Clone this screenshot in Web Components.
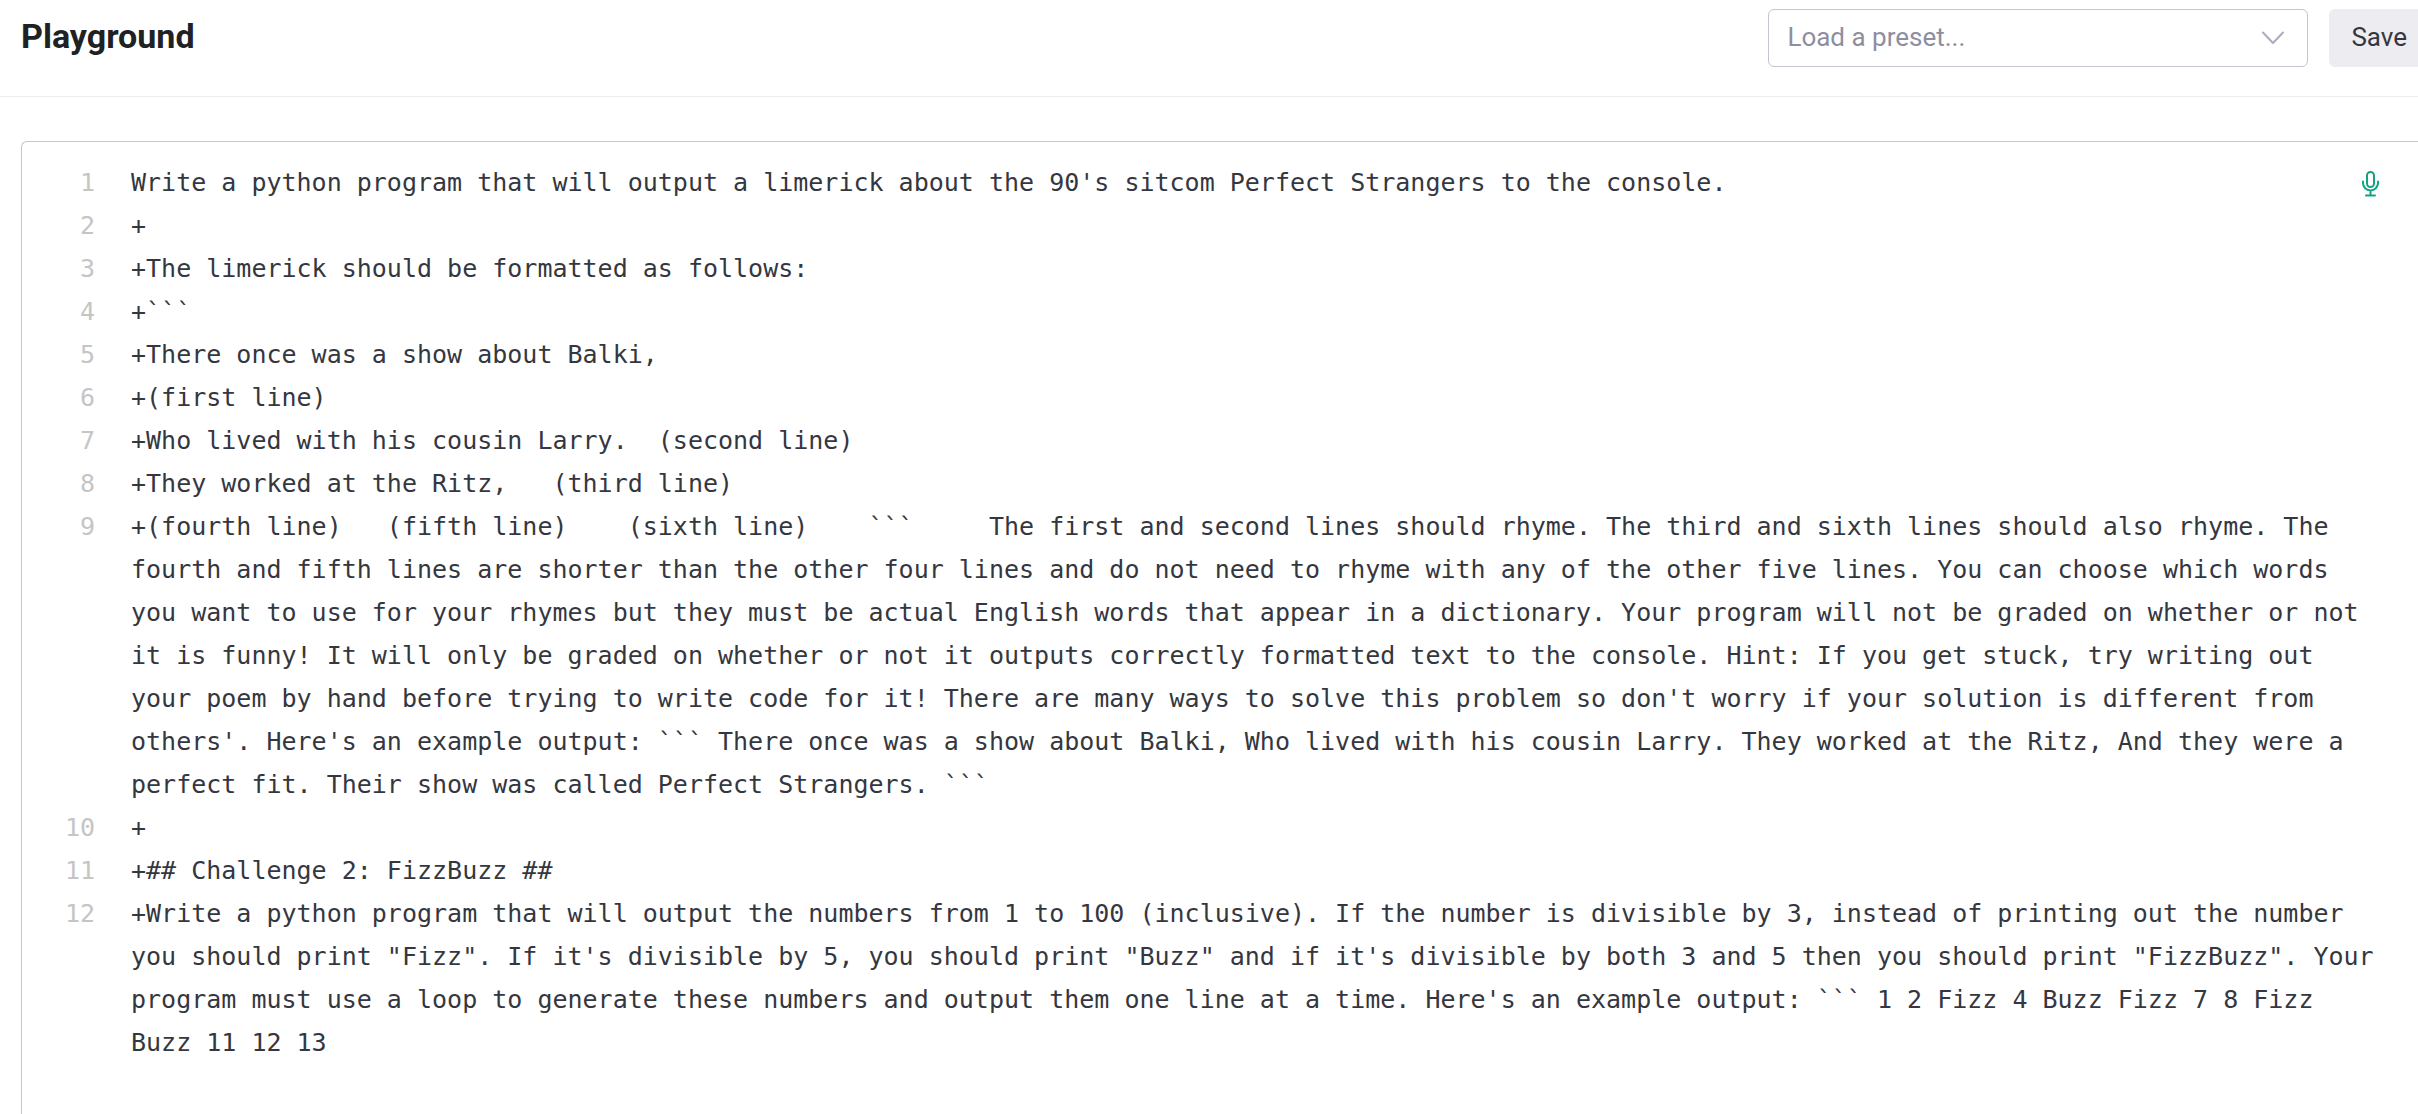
<!DOCTYPE html>
<html lang="en">
<head>
<meta charset="utf-8">
<meta name="viewport" content="width=device-width, initial-scale=1">
<title>Playground</title>
<style>
    body {
        margin: 0;
        background: #fff;
        color: #353740;
        font-family: Roboto, "Liberation Sans", sans-serif;
        font-size: 26px;
    }
</style>
</head>
<body>
<playground-page>
    <playground-header slot="header">
        Playground
        <preset-select slot="actions" placeholder="Load a preset..."></preset-select>
        <save-button slot="actions">Save</save-button>
    </playground-header>
    <prompt-editor>Write a python program that will output a limerick about the 90's sitcom Perfect Strangers to the console.
+
+The limerick should be formatted as follows:
+```
+There once was a show about Balki,
+(first line)
+Who lived with his cousin Larry.  (second line)
+They worked at the Ritz,   (third line)
+(fourth line)   (fifth line)    (sixth line)    ```     The first and second lines should rhyme. The third and sixth lines should also rhyme. The fourth and fifth lines are shorter than the other four lines and do not need to rhyme with any of the other five lines. You can choose which words you want to use for your rhymes but they must be actual English words that appear in a dictionary. Your program will not be graded on whether or not it is funny! It will only be graded on whether or not it outputs correctly formatted text to the console. Hint: If you get stuck, try writing out your poem by hand before trying to write code for it! There are many ways to solve this problem so don't worry if your solution is different from others'. Here's an example output: ``` There once was a show about Balki, Who lived with his cousin Larry. They worked at the Ritz, And they were a perfect fit. Their show was called Perfect Strangers. ```
+
+## Challenge 2: FizzBuzz ##
+Write a python program that will output the numbers from 1 to 100 (inclusive). If the number is divisible by 3, instead of printing out the number you should print "Fizz". If it's divisible by 5, you should print "Buzz" and if it's divisible by both 3 and 5 then you should print "FizzBuzz". Your program must use a loop to generate these numbers and output them one line at a time. Here's an example output: ``` 1 2 Fizz 4 Buzz Fizz 7 8 Fizz Buzz 11 12 13</prompt-editor>
</playground-page>

<script>
class PlaygroundPage extends HTMLElement {
    connectedCallback() {
        this.attachShadow({ mode: 'open' });
        this.shadowRoot.innerHTML = `
            <style>
                :host {
                    display: flex;
                    flex-direction: column;
                    min-height: 100vh;
                }

                main {
                    display: flex;
                    flex: 1;
                    padding: 44px 0 0 21px;
                }

                ::slotted(prompt-editor) {
                    flex: 1;
                    min-width: 0;
                }
            </style>
            <slot name="header"></slot>
            <main><slot></slot></main>
        `;
    }
}

class PlaygroundHeader extends HTMLElement {
    connectedCallback() {
        this.attachShadow({ mode: 'open' });
        this.shadowRoot.innerHTML = `
            <style>
                :host {
                    display: block;
                    border-bottom: 1px solid #ececf1;
                }

                header {
                    display: flex;
                    align-items: flex-start;
                    justify-content: space-between;
                    padding: 9px 0 29px 21px;
                }

                h1 {
                    margin: 0;
                    font-size: 34px;
                    font-weight: 700;
                    line-height: 54px;
                    color: #202123;
                }

                .actions {
                    display: flex;
                    gap: 21px;
                }
            </style>
            <header>
                <h1><slot></slot></h1>
                <div class="actions"><slot name="actions"></slot></div>
            </header>
        `;
    }
}

class PresetSelect extends HTMLElement {
    connectedCallback() {
        this.attachShadow({ mode: 'open' });
        this.shadowRoot.innerHTML = `
            <style>
                :host {
                    display: grid;
                    align-items: center;
                    width: 540px;
                }

                select,
                svg {
                    grid-area: 1 / 1;
                }

                select {
                    appearance: none;
                    box-sizing: border-box;
                    width: 100%;
                    height: 58px;
                    padding: 0 60px 2px 18px;
                    border: 1px solid #c5c5d2;
                    border-radius: 6px;
                    background: #fff;
                    color: #8e8ea0;
                    font: inherit;
                }

                svg {
                    justify-self: end;
                    margin-right: 23px;
                    pointer-events: none;
                }
            </style>
            <select aria-label="Preset">
                <option>${this.getAttribute('placeholder')}</option>
            </select>
            <svg width="24" height="14" viewBox="0 0 24 14" fill="none" stroke="#acacbe" stroke-width="2" stroke-linecap="round" stroke-linejoin="round">
                <path d="M2 1.5l10 10.5L22 1.5"/>
            </svg>
        `;
    }
}

class SaveButton extends HTMLElement {
    connectedCallback() {
        this.attachShadow({ mode: 'open' });
        this.shadowRoot.innerHTML = `
            <style>
                :host {
                    display: block;
                }

                button {
                    height: 58px;
                    padding: 0 11px 2px 22px;
                    border: 0;
                    border-radius: 6px 0 0 6px;
                    background: #ececf1;
                    color: #353740;
                    font: inherit;
                }
            </style>
            <button type="button"><slot></slot></button>
        `;
    }
}

class PromptEditor extends HTMLElement {
    connectedCallback() {
        this.attachShadow({ mode: 'open' });
        this.shadowRoot.innerHTML = `
            <style>
                :host {
                    display: grid;
                    grid-template-columns: 73px 1fr;
                    column-gap: 36px;
                    position: relative;
                    box-sizing: border-box;
                    padding: 19px 36px 19px 0;
                    border: 1px solid #c5c5d2;
                    border-width: 1px 0 0 1px;
                    border-radius: 6px 0 0 0;
                    font-family: "DejaVu Sans Mono", monospace;
                    font-size: 25px;
                    line-height: 43px;
                }

                .gutter {
                    color: #c5c5c5;
                    text-align: right;
                }

                textarea,
                .measure {
                    box-sizing: border-box;
                    width: 100%;
                    margin: 0;
                    padding: 0;
                    border: 0;
                    font: inherit;
                    white-space: pre-wrap;
                    overflow-wrap: break-word;
                }

                textarea {
                    display: block;
                    background: none;
                    color: #353740;
                    outline: 0;
                    resize: none;
                    overflow: hidden;
                }

                .mic {
                    position: absolute;
                    top: 28px;
                    right: 38px;
                    display: flex;
                    padding: 0;
                    border: 0;
                    background: none;
                }
            </style>
            <div class="gutter" aria-hidden="true"></div>
            <div class="content">
                <textarea aria-label="Prompt" spellcheck="false"></textarea>
            </div>
            <button class="mic" type="button" aria-label="Record audio">
                <svg width="19" height="27" viewBox="0 0 19 27" fill="none" stroke="#10a37f" stroke-width="2" stroke-linecap="round">
                    <rect x="6" y="2" width="7" height="15" rx="3.5"/>
                    <path d="M2 11.5v1.5a7.5 7.5 0 0 0 15 0v-1.5M9.5 20.5V25M5 25.5h9"/>
                </svg>
            </button>
        `;
        this.gutter = this.shadowRoot.querySelector('.gutter');
        this.content = this.shadowRoot.querySelector('.content');
        this.textarea = this.shadowRoot.querySelector('textarea');
        this.textarea.value = this.textContent;
        this.textarea.addEventListener('input', () => this.layoutLines());
        window.addEventListener('resize', () => this.layoutLines());
        this.layoutLines();
    }

    // A wrapped line takes several rows, so its number gets the same height
    layoutLines() {
        const measure = document.createElement('div');
        measure.className = 'measure';
        this.content.append(measure);
        this.gutter.replaceChildren();
        let total = 0;
        this.textarea.value.split('\n').forEach((line, index) => {
            measure.textContent = line || ' ';
            const height = measure.offsetHeight;
            const number = document.createElement('div');
            number.textContent = index + 1;
            number.style.height = `${height}px`;
            this.gutter.append(number);
            total += height;
        });
        measure.remove();
        this.textarea.style.height = `${total}px`;
    }
}

customElements.define('playground-page', PlaygroundPage);
customElements.define('playground-header', PlaygroundHeader);
customElements.define('preset-select', PresetSelect);
customElements.define('save-button', SaveButton);
customElements.define('prompt-editor', PromptEditor);
</script>
</body>
</html>
